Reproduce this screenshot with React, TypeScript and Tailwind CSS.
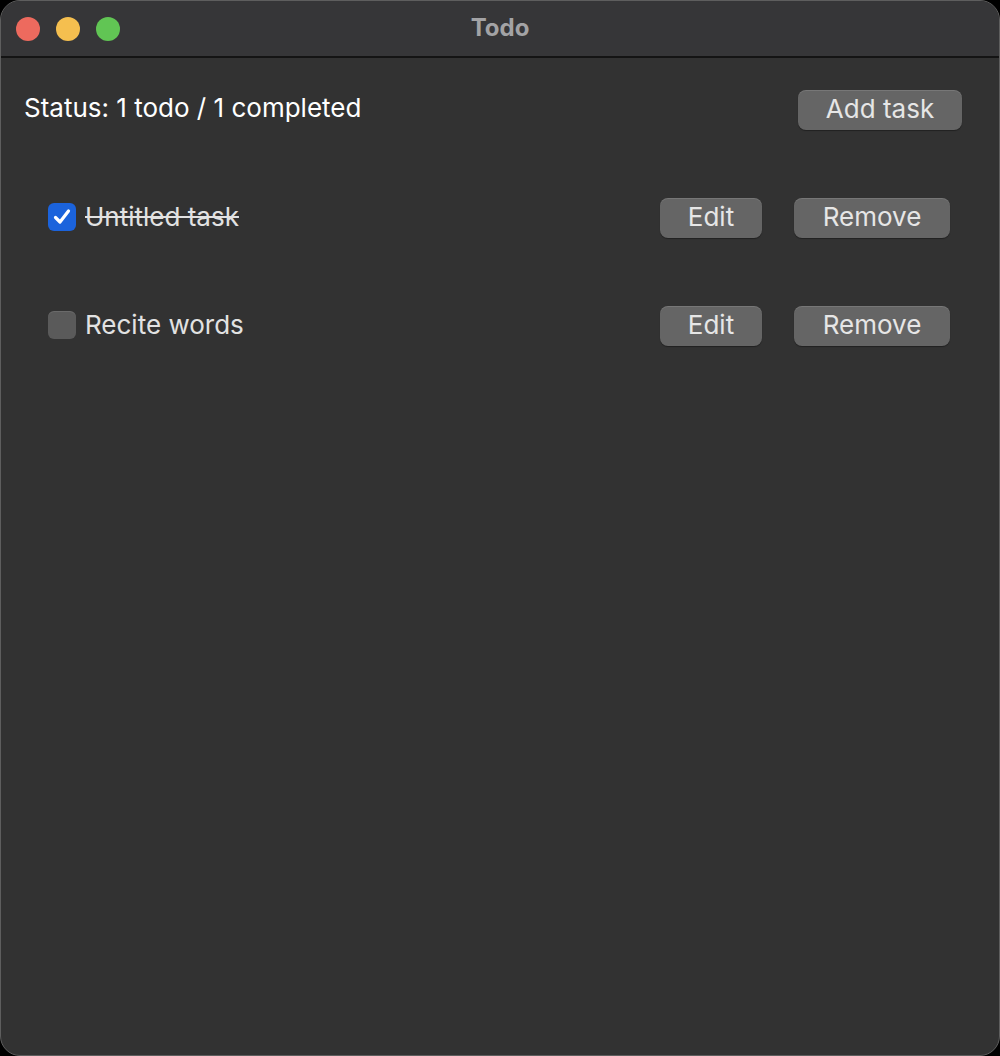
import React from 'react';

type Task = { title: string; done: boolean };

const tasks: Task[] = [
  { title: 'Untitled task', done: true },
  { title: 'Recite words', done: false },
];

const Button = ({ label, className }: { label: string; className: string }) => (
  <button
    className={`h-10 pb-[2px] rounded-[8px] bg-[#656565] text-[#e6e6e6] text-[26px] leading-none shadow-[inset_0_1px_0_rgba(255,255,255,0.12),0_1px_1px_rgba(0,0,0,0.35)] ${className}`}
  >
    {label}
  </button>
);

const Checkbox = ({ checked }: { checked: boolean }) =>
  checked ? (
    <span className="w-7 h-7 mb-[3px] rounded-[6px] bg-[#1b63dc] flex items-center justify-center shrink-0">
      <svg width="20" height="20" viewBox="0 0 20 20" fill="none">
        <path d="M3.5 10.5 L8 15 L16.5 4" stroke="white" strokeWidth="3.2" strokeLinecap="round" strokeLinejoin="round" />
      </svg>
    </span>
  ) : (
    <span className="w-7 h-7 mb-[3px] rounded-[6px] bg-[#5a5a5a] shadow-[inset_0_1px_0_rgba(255,255,255,0.1)] shrink-0" />
  );

export default function App() {
  return (
    <div className="w-[1000px] h-[1056px] bg-black" style={{ fontFamily: 'Inter, "Noto Sans", sans-serif' }}>
      <div className="w-full h-full rounded-[20px] border border-[#5e5e5e] bg-[#323232] overflow-hidden flex flex-col">
        <div className="h-[57px] bg-[#363638] border-b-2 border-[#141414] flex items-center relative shrink-0">
          <div className="flex gap-[16px] pl-[15px]">
            <span className="w-6 h-6 rounded-full bg-[#ed6a5e]" />
            <span className="w-6 h-6 rounded-full bg-[#f5bf4f]" />
            <span className="w-6 h-6 rounded-full bg-[#61c554]" />
          </div>
          <div className="absolute inset-0 pb-[2px] flex items-center justify-center text-[24px] font-bold text-[#a3a3a5]">
            Todo
          </div>
        </div>
        <div className="flex flex-col pl-[23px] pr-[37px]">
          <div className="h-10 flex items-center justify-between mt-[32px]">
            <span className="pb-[4px] leading-[32px] text-[26px] text-white">Status: 1 todo / 1 completed</span>
            <Button label="Add task" className="w-[164px]" />
          </div>
          <div className="flex flex-col gap-[68px] mt-[68px] pl-[24px] pr-[12px]">
            {tasks.map((t) => (
              <div key={t.title} className="h-10 flex items-center">
                <Checkbox checked={t.done} />
                <span className={`ml-[9px] pb-[3px] leading-[32px] text-[26px] text-[#e2e2e2] ${t.done ? 'line-through' : ''}`}>{t.title}</span>
                <div className="ml-auto flex gap-[32px]">
                  <Button label="Edit" className="w-[102px]" />
                  <Button label="Remove" className="w-[156px]" />
                </div>
              </div>
            ))}
          </div>
        </div>
      </div>
    </div>
  );
}
